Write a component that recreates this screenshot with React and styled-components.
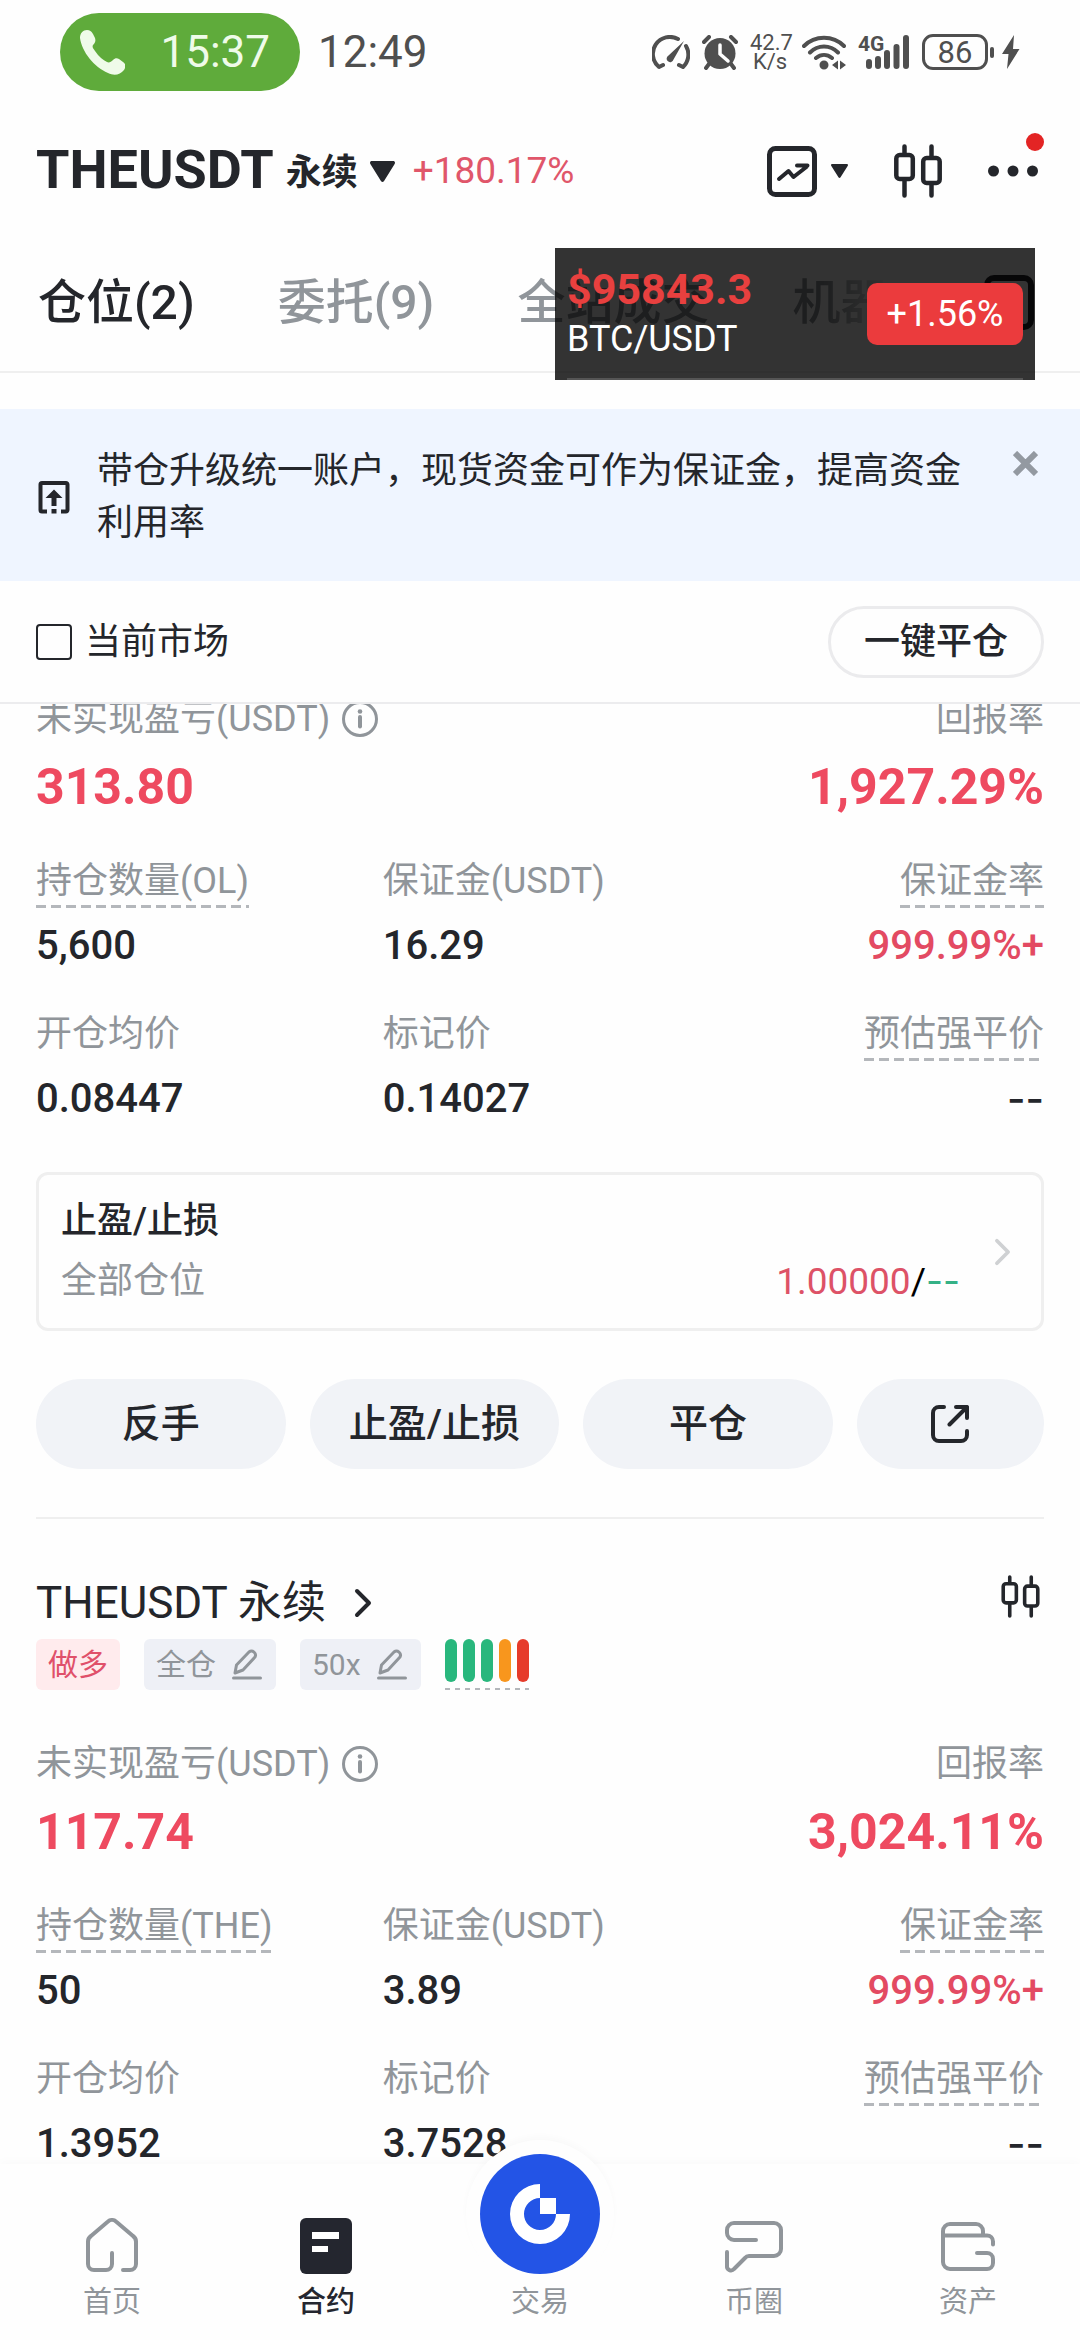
import React from 'react'
import styled, { createGlobalStyle } from 'styled-components'

const GlobalStyle = createGlobalStyle`
  * {
    box-sizing: border-box;
  }

  body {
    margin: 0;
    background: #fefefe;
    color: #24262b;
    font-family: Roboto, 'Noto Sans CJK SC', sans-serif;
    font-size: 36px;
    line-height: 44px;
  }

  button, input {
    font: inherit;
    color: inherit;
    margin: 0;
    padding: 0;
  }

  button {
    border: 0;
    background: none;
    cursor: pointer;
  }

  svg {
    display: block;
    flex: none;
  }

  h1, h2, p, ul, dl, dd {
    margin: 0;
    padding: 0;
  }
`

/* ---------- icons ---------- */

const StrokeIcon = styled.svg.attrs({ 'aria-hidden': true })`
  fill: none;
  stroke: currentColor;
  stroke-width: ${({ $w }) => $w || 4};
  stroke-linecap: round;
  stroke-linejoin: round;
`

const FillIcon = styled.svg.attrs({ 'aria-hidden': true })`
  fill: currentColor;
`

const PhoneIcon = () => (
  <FillIcon width="45" height="45" viewBox="0 0 45 45">
    <path d="M7 0c3 0 4 1 6 4l2 4c1 3 0 5-2 7-1 2 0 3 2 6 4 6 8 9 12 11 2 1 4 0 6-2s4-2 6-1l4 3c3 2 3 5 1 8-4 5-10 6-16 3C14 37 2 22 0 8 0 3 3 0 7 0z" />
  </FillIcon>
)

const GaugeIcon = () => (
  <StrokeIcon width="38" height="35" viewBox="0 0 38 35">
    <path d="M11 30l-4 2A17 17 0 0 1 26 4M34 11a17 17 0 0 1-3 21l-4-2" />
    <path d="M32 6L16.500 20.500a3.500 3.500 0 1 0 5 4z" fill="currentColor" stroke="none" />
  </StrokeIcon>
)

const AlarmIcon = () => (
  <StrokeIcon width="36" height="35" viewBox="0 0 36 35">
    <circle cx="18" cy="18.500" r="15.500" fill="currentColor" stroke="none" />
    <path d="M2 7l5-5M34 7l-5-5M7 29l-3 4M29 29l3 4" />
    <path d="M18 10v9l8 7" stroke="#fefefe" strokeWidth="3.500" />
  </StrokeIcon>
)

const WifiIcon = () => (
  <StrokeIcon width="44" height="35" viewBox="0 0 44 35">
    <path d="M2 11C13 0 31 0 42 11M8 17.500c8-8 20-8 28 0M14 23c5-4 11-4 16 0" />
    <path d="M17.500 30a4.500 4.500 0 1 0 9 0 4.500 4.500 0 1 0-9 0zM30 30l6-4.500v9zM44 30l-6-4.500v9z" fill="currentColor" stroke="none" />
  </StrokeIcon>
)

const BarsIcon = () => (
  <StrokeIcon $w={6} width="44" height="34" viewBox="0 0 44 34">
    <path d="M3 27v4M12 24v7M21 18v13M30.500 12v19M40 3v28" />
  </StrokeIcon>
)

const BoltIcon = () => (
  <FillIcon width="18" height="34" viewBox="0 0 18 34">
    <path d="M12 0L0 19h6.500L5 34 17.500 14H11z" />
  </FillIcon>
)

const CaretIcon = ({ width, height }) => (
  <FillIcon width={width} height={height} viewBox="0 0 24 20" preserveAspectRatio="none">
    <path d="M2 0h20c2 0 2.500 1.500 1.500 3L13.500 19c-1 1.300-2 1.300-3 0L.5 3C-.5 1.500 0 0 2 0z" />
  </FillIcon>
)

const ChartIcon = () => (
  <StrokeIcon $w={5} width="50" height="51" viewBox="0 0 50 51">
    <rect x="2.500" y="2.500" width="45" height="46" rx="6" />
    <path d="M12 33l9.500-8 5 6L40 20.500M30 19.500h10.500" strokeWidth="4" />
  </StrokeIcon>
)

const CandleIcon = ({ width, height }) => (
  <StrokeIcon $w={4.5} width={width} height={height} viewBox="0 0 48 54">
    <rect x="2.300" y="11" width="16.500" height="24" rx="3.500" />
    <rect x="29.200" y="14" width="16.500" height="25" rx="3.500" />
    <path d="M10.500 2.500V10M10.500 36v15.500M37.500 2.500V13M37.500 40v11.500" />
  </StrokeIcon>
)

const DotsIcon = () => (
  <FillIcon width="50" height="12" viewBox="0 0 50 12">
    <circle cx="5.500" cy="6" r="5.500" />
    <circle cx="25" cy="6" r="5.500" />
    <circle cx="44.500" cy="6" r="5.500" />
  </FillIcon>
)

const PanelIcon = () => (
  <StrokeIcon $w={6} width="50" height="55" viewBox="0 0 50 55">
    <rect x="3" y="3" width="44" height="49" rx="7" />
  </StrokeIcon>
)

const UpgradeIcon = () => (
  <StrokeIcon width="32" height="33" viewBox="0 0 32 33">
    <path d="M9 30.500H4a1.500 1.500 0 0 1-1.500-1.500V3.500A1.500 1.500 0 0 1 4 2h24a1.500 1.500 0 0 1 1.500 1.500V29a1.500 1.500 0 0 1-1.500 1.500h-5" strokeLinecap="butt" />
    <path d="M16 8.500l8.500 8.500h-6v8h-5v-8h-6zM13.500 28h5v4.500h-5z" fill="currentColor" stroke="none" />
  </StrokeIcon>
)

const CloseIcon = () => (
  <StrokeIcon $w={6} width="25" height="25" viewBox="0 0 25 25">
    <path d="M2 2l21 21M23 2L2 23" strokeLinecap="butt" />
  </StrokeIcon>
)

const InfoIcon = () => (
  <StrokeIcon $w={3} width="36" height="36" viewBox="0 0 36 36">
    <circle cx="18" cy="18" r="16.500" />
    <path d="M18 16v9.500" strokeWidth="4" />
    <circle cx="18" cy="10.500" r="2.300" fill="currentColor" stroke="none" />
  </StrokeIcon>
)

const ChevronIcon = ({ width, height, weight }) => (
  <StrokeIcon $w={weight} width={width} height={height} viewBox="0 0 18 30">
    <path d="M3 3l12 12L3 27" />
  </StrokeIcon>
)

const ShareIcon = () => (
  <StrokeIcon width="38" height="38" viewBox="0 0 38 38">
    <path d="M13 2H8a6 6 0 0 0-6 6v22a6 6 0 0 0 6 6h22a6 6 0 0 0 6-6v-4M25 2h11v11M36 2L18.500 19.500" />
  </StrokeIcon>
)

const PencilIcon = () => (
  <StrokeIcon $w={3} width="30" height="31" viewBox="0 0 30 31">
    <path d="M1.500 29h27M3 24l1.500-8L17 3a4 4 0 0 1 6 5L11 21z" />
  </StrokeIcon>
)

const HomeIcon = () => (
  <StrokeIcon width="52" height="56" viewBox="0 0 52 56">
    <path d="M37 52h7a6 6 0 0 0 6-6V24a7 7 0 0 0-3-6L30 3.500a6 6 0 0 0-8 0L5 18a7 7 0 0 0-3 6v22a6 6 0 0 0 6 6h12a6 6 0 0 0 6-6V35" />
  </StrokeIcon>
)

const ContractIcon = () => (
  <FillIcon width="52" height="56" viewBox="0 0 52 56">
    <rect width="52" height="56" rx="6" />
    <path d="M12 14h27v7H12zM12 28h16v6H12z" fill="#fff" />
  </FillIcon>
)

const ChatIcon = () => (
  <StrokeIcon width="58" height="54" viewBox="0 0 58 54">
    <path d="M31 20H9a7 7 0 0 1-7-7v-3a7 7 0 0 1 7-7h40a7 7 0 0 1 7 7v19a7 7 0 0 1-7 7H24a5 5 0 0 0-4 2L9 49a4 4 0 0 1-7-3V32" />
  </StrokeIcon>
)

const WalletIcon = () => (
  <StrokeIcon width="54" height="54" viewBox="0 0 54 54">
    <path d="M2 15.500h44a6 6 0 0 1 6 6v3M42 15v-4a7 7 0 0 0-7-7H9a7 7 0 0 0-7 7v31a7 7 0 0 0 7 7h37a6 6 0 0 0 6-6v-4a6 6 0 0 0-6-6H36" />
  </StrokeIcon>
)

const LogoIcon = () => (
  <FillIcon width="60" height="60" viewBox="-30 -30 60 60">
    <path d="M0-30A30 30 0 1 0 30 0H16A16 16 0 1 1 0-16zM0-16h16V0H0z" />
  </FillIcon>
)

/* ---------- layout ---------- */

const Screen = styled.div`
  position: relative;
  display: flex;
  flex-direction: column;
  height: 100vh;
  overflow: hidden;
`

const StatusBar = styled.div`
  display: flex;
  align-items: center;
  justify-content: space-between;
  height: 104px;
  padding: 0 60px;
  color: #4f4f4f;

  > div {
    display: flex;
    align-items: center;
  }
`

const Clock = styled.time`
  font-size: 44px;
`

const CallPill = styled.button`
  display: flex;
  align-items: center;
  justify-content: space-between;
  width: 240px;
  height: 78px;
  margin-right: 18px;
  padding: 0 30px 0 20px;
  border-radius: 39px;
  background: #5fab3b;
  color: #effbe9;
`

const StatusIcons = styled.div`
  gap: 12px;
`

const NetSpeed = styled.span`
  width: 40px;
  font-size: 22px;
  line-height: 19px;
  text-align: center;
`

const Signal = styled.span`
  position: relative;
  padding-left: 8px;

  b {
    position: absolute;
    top: 0;
    left: 0;
    font-size: 21px;
    line-height: 18px;
  }
`

const Battery = styled.span`
  display: flex;
  align-items: center;
  gap: 2px;

  span {
    width: 66px;
    height: 36px;
    border: 3px solid #4f4f4f;
    border-radius: 11px;
    font-size: 31px;
    line-height: 31px;
    text-align: center;
  }

  i {
    width: 4px;
    height: 11px;
    margin-right: 6px;
    border-radius: 2px;
    background: #4f4f4f;
  }
`

const Header = styled.header`
  display: flex;
  align-items: center;
  justify-content: space-between;
  height: 132px;
  padding: 2px 42px 0 36px;
`

const PairButton = styled.button`
  display: flex;
  align-items: center;
  gap: 12px;

  h1 {
    font-size: 54px;
    font-weight: 700;
  }

  h1 small {
    font-size: 36px;
    vertical-align: 3px;
  }
`

const PairChange = styled.span`
  margin-left: 6px;
  font-size: 37px;
  color: #e0566a;
`

const HeaderTools = styled.div`
  display: flex;
  align-items: center;
  gap: 46px;
`

const ToolButton = styled.button`
  position: relative;
  display: flex;
  align-items: center;
  align-self: ${({ $top }) => ($top ? 'flex-start' : 'center')};
  gap: 14px;
`

const RedDot = styled.i`
  position: absolute;
  top: -32px;
  right: -6px;
  width: 18px;
  height: 18px;
  border-radius: 50%;
  background: #e32424;
`

const Tabs = styled.nav`
  display: flex;
  align-items: center;
  justify-content: space-between;
  gap: 92px;
  height: 137px;
  padding: 0 46px 2px 38px;
  border-bottom: 2px solid #efefef;
`

const TabList = styled.div`
  display: flex;
  flex: 1;
  gap: 83px;
  overflow: hidden;
  mask-image: linear-gradient(to right, #000 calc(100% - 70px), transparent);
`

const Tab = styled.button`
  flex: none;
  font-size: 48px;
  line-height: 60px;
  font-weight: 500;
  color: ${({ $active }) => ($active ? '#24262b' : '#90959a')};
`

const Ticker = styled.aside`
  position: absolute;
  z-index: 3;
  top: 248px;
  right: 45px;
  display: flex;
  align-items: center;
  justify-content: space-between;
  width: 480px;
  height: 132px;
  padding: 0 12px;
  background: linear-gradient(#555, #555) 12px 130px / 456px 2px no-repeat, rgba(0, 0, 0, 0.8);
  color: #fff;
  line-height: 50px;

  strong {
    display: block;
    font-size: 43px;
    color: #e8403f;
  }
`

const TickerChange = styled.span`
  width: 156px;
  border-radius: 10px;
  background: #eb3b3d;
  line-height: 62px;
  text-align: center;
`

const Banner = styled.section`
  display: flex;
  align-items: center;
  margin-top: 36px;
  padding: 36px 42px 32px 38px;
  background: #eff5ff;

  p {
    flex: 1;
    margin: 0 52px 0 27px;
    line-height: 52px;
  }

  button {
    align-self: flex-start;
    margin-top: 6px;
    color: #9399a1;
  }
`

const FilterBar = styled.div`
  display: flex;
  align-items: center;
  justify-content: space-between;
  height: 123px;
  padding: 0 36px;
  border-bottom: 2px solid #ececee;

  label {
    display: flex;
    align-items: center;
    gap: 13px;
  }

  input {
    appearance: none;
    width: 36px;
    height: 36px;
    border: 2px solid #24262b;
    border-radius: 4px;
  }

  input:checked {
    background: #24262b;
  }
`

const OutlineButton = styled.button`
  width: 216px;
  height: 72px;
  border: 3px solid #ebebed;
  border-radius: 36px;
  font-weight: 500;
`

/* the list is scrolled so that the first label touches the filter bar */
const Positions = styled.main`
  flex: 1;
  min-height: 0;
  overflow: hidden;
  padding: 0 36px;

  > :first-child {
    margin-top: -7px;
  }
`

const Position = styled.article`
  & + & {
    padding-top: 56px;
    border-top: 2px solid #efefef;
  }
`

const PositionHead = styled.div`
  display: flex;
  justify-content: space-between;
  padding-right: 4px;
`

const PositionTitle = styled.button`
  display: flex;
  align-items: center;
  gap: 28px;

  h2 {
    font-size: 44px;
    line-height: 56px;
    font-weight: 400;
  }
`

const Tags = styled.div`
  display: flex;
  gap: 24px;
  margin: 8px 0 52px;
`

const Tag = styled.span`
  display: flex;
  align-items: center;
  gap: 16px;
  height: 51px;
  padding: 0 ${({ $long }) => ($long ? 12 : 14)}px 0 12px;
  border-radius: 6px;
  background: ${({ $long }) => ($long ? '#ffebed' : '#eef0f6')};
  color: ${({ $long }) => ($long ? '#e0506a' : '#90959a')};
  font-size: 30px;
`

const dashes = (on, step, height) => `
  background: repeating-linear-gradient(to right, #b4b7bb 0 ${on}px, transparent ${on}px ${step}px)
    bottom / 100% ${height}px no-repeat;
`

const Risk = styled.div`
  display: flex;
  gap: 6px;
  ${dashes(5, 10, 2)}

  i {
    width: 12px;
    height: 43px;
    border-radius: 6px;
  }
`

const RiskBar = styled.i`
  background: ${({ $color }) => $color};
`

const Summary = styled.dl`
  display: flex;
  justify-content: space-between;
  margin-bottom: 42px;

  dt {
    display: flex;
    align-items: center;
    gap: 12px;
    margin-bottom: 16px;
    color: #90959a;
  }

  div:last-child dt {
    justify-content: flex-end;
  }

  dd {
    font-size: 50px;
    line-height: 60px;
    font-weight: 700;
    color: #ee4a60;
  }
`

const Metrics = styled.dl`
  display: grid;
  grid-template-columns: repeat(3, 1fr);
  gap: 42px 32px;

  div {
    display: flex;
    flex-direction: column;
    align-items: flex-start;
    gap: 14px;
  }

  div:nth-child(3n) {
    align-items: flex-end;
  }
`

const MetricLabel = styled.dt`
  padding-bottom: 5px;
  color: #90959a;
  ${({ $dashed }) => $dashed && dashes(10, 15, 3)}
`

const MetricValue = styled.dd`
  font-size: 40px;
  line-height: 48px;
  font-weight: 500;
  color: ${({ $red }) => ($red ? '#e34a62' : 'inherit')};
`

const Empty = styled.span`
  font-family: Inter, sans-serif;
`

const StopCard = styled.button`
  display: flex;
  align-items: center;
  justify-content: space-between;
  width: 100%;
  margin: 48px 0;
  padding: 24px 30px 24px 22px;
  border: 3px solid #efefef;
  border-radius: 12px;
  text-align: left;

  > svg {
    color: #cfd1d3;
  }
`

const StopBody = styled.span`
  flex: 1;
  display: grid;
  grid-template-columns: 1fr auto;
  gap: 16px;
  margin-right: 34px;

  b {
    grid-column: 1 / 3;
    font-weight: 500;
  }

  > span {
    color: #90959a;
  }
`

const StopPrice = styled.em`
  font-size: 37px;
  font-style: normal;
  color: #000;

  span:first-child {
    color: #dd5267;
  }

  span:last-child {
    color: #35b186;
  }
`

const Actions = styled.div`
  display: grid;
  grid-template-columns: 4fr 4fr 4fr 3fr;
  gap: 24px;
  margin-bottom: 48px;
`

const ActionButton = styled.button`
  display: flex;
  align-items: center;
  justify-content: center;
  height: 90px;
  border-radius: 45px;
  background: #f1f3f7;
  font-size: 39px;
  font-weight: 500;
`

const BottomNav = styled.nav`
  position: relative;
  z-index: 2;
  display: flex;
  height: 176px;
  padding: 0 5px 20px;
  background: #fefefe;
  box-shadow: 0 -3px 10px rgba(0, 0, 0, 0.02);
`

const NavItem = styled.a`
  flex: 1;
  display: flex;
  flex-direction: column;
  align-items: center;
  justify-content: flex-end;
  gap: 10px;
  color: ${({ $active }) => ($active ? '#24262f' : '#90959a')};
  font-size: 29px;
  line-height: 36px;
  font-weight: ${({ $active }) => ($active ? 500 : 400)};
  text-decoration: none;
`

const TradeCircle = styled.span`
  display: flex;
  flex: none;
  align-items: center;
  justify-content: center;
  width: 120px;
  height: 120px;
  border-radius: 50%;
  background: #2354e6;
  box-shadow: 0 0 0 14px #fefefe, 0 -4px 6px 14px rgba(0, 0, 0, 0.02);
  color: #fff;
`

/* ---------- data ---------- */

const TABS = ['仓位(2)', '委托(9)', '全站成交', '机器人']

const RISK = ['#29b77d', '#29b77d', '#29b77d', '#f8961d', '#e63b2b']

const POSITIONS = [
  {
    id: 'ol',
    pnl: '313.80',
    roi: '1,927.29%',
    metrics: [
      { label: '持仓数量(OL)', value: '5,600', dashed: true },
      { label: '保证金(USDT)', value: '16.29' },
      { label: '保证金率', value: '999.99%+', dashed: true, red: true },
      { label: '开仓均价', value: '0.08447' },
      { label: '标记价', value: '0.14027' },
      { label: '预估强平价', dashed: true },
    ],
    stop: '1.00000',
  },
  {
    id: 'the',
    title: 'THEUSDT 永续',
    leverage: '50x',
    pnl: '117.74',
    roi: '3,024.11%',
    metrics: [
      { label: '持仓数量(THE)', value: '50', dashed: true },
      { label: '保证金(USDT)', value: '3.89' },
      { label: '保证金率', value: '999.99%+', dashed: true, red: true },
      { label: '开仓均价', value: '1.3952' },
      { label: '标记价', value: '3.7528' },
      { label: '预估强平价', dashed: true },
    ],
  },
]

const PositionCard = ({ position }) => (
  <Position>
    {position.title && (
      <>
        <PositionHead>
          <PositionTitle>
            <h2>{position.title}</h2>
            <ChevronIcon width={18} height={30} weight={4} />
          </PositionTitle>
          <ToolButton $top aria-label="K线">
            <CandleIcon width={39} height={43} />
          </ToolButton>
        </PositionHead>
        <Tags>
          <Tag $long>做多</Tag>
          <Tag>全仓<PencilIcon /></Tag>
          <Tag>{position.leverage}<PencilIcon /></Tag>
          <Risk>
            {RISK.map((color, i) => <RiskBar key={i} $color={color} />)}
          </Risk>
        </Tags>
      </>
    )}
    <Summary>
      <div>
        <dt>未实现盈亏(USDT)<InfoIcon /></dt>
        <dd>{position.pnl}</dd>
      </div>
      <div>
        <dt>回报率</dt>
        <dd>{position.roi}</dd>
      </div>
    </Summary>
    <Metrics>
      {position.metrics.map((m) => (
        <div key={m.label}>
          <MetricLabel $dashed={m.dashed}>{m.label}</MetricLabel>
          <MetricValue $red={m.red}>{m.value || <Empty>--</Empty>}</MetricValue>
        </div>
      ))}
    </Metrics>
    {position.stop && (
      <>
        <StopCard>
          <StopBody>
            <b>止盈/止损</b>
            <span>全部仓位</span>
            <StopPrice>
              <span>{position.stop}</span>/<Empty>--</Empty>
            </StopPrice>
          </StopBody>
          <ChevronIcon width={17} height={28} weight={4} />
        </StopCard>
        <Actions>
          <ActionButton>反手</ActionButton>
          <ActionButton>止盈/止损</ActionButton>
          <ActionButton>平仓</ActionButton>
          <ActionButton aria-label="分享"><ShareIcon /></ActionButton>
        </Actions>
      </>
    )}
  </Position>
)

const App = () => (
  <Screen>
    <GlobalStyle />
    <StatusBar>
      <div>
        <CallPill>
          <PhoneIcon />
          <Clock>15:37</Clock>
        </CallPill>
        <Clock>12:49</Clock>
      </div>
      <StatusIcons>
        <GaugeIcon />
        <AlarmIcon />
        <NetSpeed>42.7<br />K/s</NetSpeed>
        <WifiIcon />
        <Signal><b>4G</b><BarsIcon /></Signal>
        <Battery><span>86</span><i /><BoltIcon /></Battery>
      </StatusIcons>
    </StatusBar>

    <Header>
      <PairButton>
        <h1>THEUSDT <small>永续</small></h1>
        <CaretIcon width={25} height={21} />
        <PairChange>+180.17%</PairChange>
      </PairButton>
      <HeaderTools>
        <ToolButton aria-label="图表"><ChartIcon /><CaretIcon width={17} height={14} /></ToolButton>
        <ToolButton aria-label="K线"><CandleIcon width={48} height={54} /></ToolButton>
        <ToolButton aria-label="更多"><DotsIcon /><RedDot /></ToolButton>
      </HeaderTools>
    </Header>

    <Tabs>
      <TabList>
        {TABS.map((tab, i) => <Tab key={tab} $active={i === 0}>{tab}</Tab>)}
      </TabList>
      <ToolButton aria-label="记录"><PanelIcon /></ToolButton>
    </Tabs>

    <Ticker>
      <div>
        <strong>$95843.3</strong>
        BTC/USDT
      </div>
      <TickerChange>+1.56%</TickerChange>
    </Ticker>

    <Banner>
      <UpgradeIcon />
      <p>带仓升级统一账户，现货资金可作为保证金，提高资金利用率</p>
      <button aria-label="关闭"><CloseIcon /></button>
    </Banner>

    <FilterBar>
      <label><input type="checkbox" />当前市场</label>
      <OutlineButton>一键平仓</OutlineButton>
    </FilterBar>

    <Positions>
      {POSITIONS.map((p) => <PositionCard key={p.id} position={p} />)}
    </Positions>

    <BottomNav>
      <NavItem href="#home"><HomeIcon />首页</NavItem>
      <NavItem href="#contract" $active><ContractIcon />合约</NavItem>
      <NavItem href="#trade"><TradeCircle><LogoIcon /></TradeCircle>交易</NavItem>
      <NavItem href="#circle"><ChatIcon />币圈</NavItem>
      <NavItem href="#assets"><WalletIcon />资产</NavItem>
    </BottomNav>
  </Screen>
)

export default App
